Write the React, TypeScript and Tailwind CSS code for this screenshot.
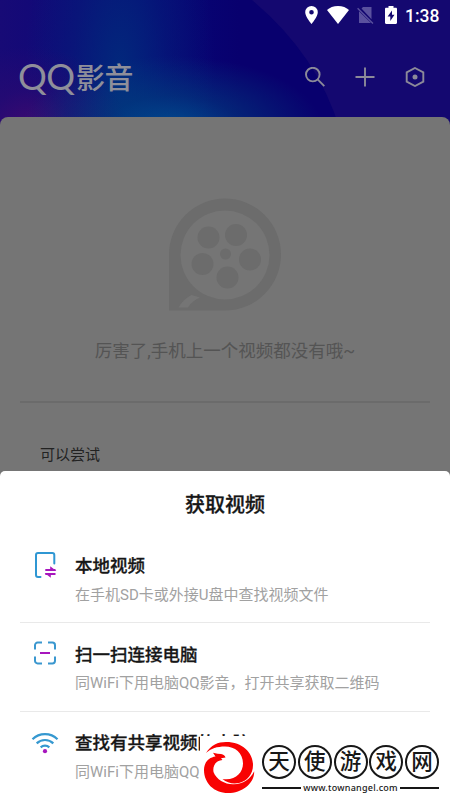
import type { ReactNode } from 'react';

type SourceItem = {
  title: string;
  desc: string;
  icon: ReactNode;
};

function PhoneTransferIcon() {
  return (
    <svg className="size-[30px]" viewBox="0 0 30 30" fill="none">
      <path d="M10.500 27H8a2 2 0 0 1-2-2V5a2 2 0 0 1 2-2h14.300a2 2 0 0 1 2 2v8.500" stroke="#2f97d3" strokeWidth="2" strokeLinecap="round" />
      <path d="M15.300 20h10.200M15.300 24h10.200" stroke="#a716bd" strokeWidth="2" />
      <path d="M20.200 16.200l6.200 4.800h-6.200zM20.800 27.800L14.600 23h6.200z" fill="#a716bd" />
    </svg>
  );
}

function ScanIcon() {
  return (
    <svg className="size-[30px]" viewBox="0 0 30 30" fill="none">
      <path
        d="M12 4.600H7.600A2.600 2.600 0 0 0 5 7.200v4.300M18 4.600h4.400A2.600 2.600 0 0 1 25 7.200v4.300M12 25.400H7.600A2.600 2.600 0 0 1 5 22.800v-4.300M18 25.400h4.400a2.600 2.600 0 0 0 2.600-2.600v-4.300"
        stroke="#3a97cf"
        strokeWidth="2"
      />
      <path d="M10 15h10" stroke="#a716bd" strokeWidth="2" />
    </svg>
  );
}

function WifiShareIcon() {
  return (
    <svg className="size-[30px]" viewBox="0 0 30 30" fill="none" strokeWidth="2.200">
      <path d="M2.500 12.200a17.700 17.700 0 0 1 25 0M6.700 16.400a11.800 11.800 0 0 1 16.600 0M10.700 20.400a6.100 6.100 0 0 1 8.600 0" stroke="#3598d0" />
      <circle cx="15" cy="24.200" r="2.100" fill="#a716bd" />
    </svg>
  );
}

const SOURCES: SourceItem[] = [
  { title: '本地视频', desc: '在手机SD卡或外接U盘中查找视频文件', icon: <PhoneTransferIcon /> },
  { title: '扫一扫连接电脑', desc: '同WiFi下用电脑QQ影音，打开共享获取二维码', icon: <ScanIcon /> },
  { title: '查找有共享视频的电脑', desc: '同WiFi下用电脑QQ', icon: <WifiShareIcon /> },
];

function StatusBar() {
  return (
    <div className="flex h-[30px] items-center justify-end pr-[10px] text-white">
      <svg className="h-[18px] w-[13px]" viewBox="0 0 13 18">
        <path fill="currentColor" fillRule="evenodd" d="M6.500 0A6.300 6.300 0 0 0 .2 6.300C.2 11 6.500 18 6.500 18s6.300-7 6.300-11.700A6.300 6.300 0 0 0 6.500 0zm0 4a2.300 2.300 0 1 1 0 4.600 2.300 2.300 0 0 1 0-4.600z" />
      </svg>
      <svg className="ml-[9px] h-[18px] w-[22px]" viewBox="0 0 22 18">
        <path fill="currentColor" d="M11 18L0 4.100C2.500 1.600 6.500 0 11 0s8.500 1.600 11 4.100z" />
      </svg>
      <svg className="ml-[8px] h-[18px] w-[17px] text-[#5a519e]" viewBox="0 0 17 18">
        <path fill="currentColor" d="M4.500 2.500L6 1h8.500v12.200zM2 5.300L14 17H2z" />
        <path stroke="currentColor" strokeWidth="1.300" d="M.6 2.200L16 17.500" />
      </svg>
      <svg className="ml-[11px] h-[18px] w-[12px]" viewBox="0 0 12 18">
        <path fill="currentColor" fillRule="evenodd" d="M3.500 0h5v1.800h2.300c.7 0 1.200.5 1.200 1.200v13.800c0 .7-.5 1.200-1.200 1.200H1.200C.5 18 0 17.500 0 16.800V3c0-.7.500-1.200 1.200-1.200h2.300zM7 4.500l-4.400 6h2.700V15l4.200-6.200H7z" />
      </svg>
      <span className="ml-[8px] w-[35px] pt-px whitespace-nowrap text-[17.500px] font-medium leading-[30px] font-[Roboto,sans-serif]">1:38</span>
    </div>
  );
}

function Header() {
  return (
    <header className="relative h-[130px] bg-[#08006e] bg-[radial-gradient(ellipse_150px_72px_at_172px_128px,#005090e6_0%,#00468080_45%,#00408000_100%),radial-gradient(ellipse_95px_80px_at_30px_126px,#3c0a70_0%,#300a7080_45%,#200a7000_100%),radial-gradient(ellipse_95px_230px_at_120px_70px,#02287c_0%,#04227a80_50%,#05187a00_100%),linear-gradient(90deg,#170a76_0px,#100878_60px,#070778_140px,#08006e_240px)]">
      <svg className="absolute inset-0 h-full w-full" viewBox="0 0 450 130" fill="none">
        <path d="M252 0Q318 55 340 130H450V0z" fill="#190b71" fillOpacity=".7" />
      </svg>
      <div className="relative">
        <StatusBar />
        <div className="flex h-[94px] items-center justify-between pr-[25px] pl-[18px] text-[#8c8a99]">
          <h1 className="-mt-[2px] flex h-[36px] items-center whitespace-nowrap text-[#8f8f9a]">
            <span className="w-[58px] text-[36px] leading-[36px] tracking-[-0.500px] font-[Lato,sans-serif]">QQ</span>
            <span className="text-[29px] font-medium leading-[36px] tracking-[-0.500px] font-['Noto_Sans_CJK_SC',sans-serif]">影音</span>
          </h1>
          <div className="flex items-center gap-[30px]">
            <svg className="size-[20px]" viewBox="0 0 20 20" fill="none" stroke="currentColor" strokeWidth="1.900">
              <circle cx="7.800" cy="7.600" r="6.800" />
              <path d="M12.600 12.400L19.300 19.100" />
            </svg>
            <svg className="size-[20px]" viewBox="0 0 20 20" fill="none" stroke="currentColor" strokeWidth="1.900">
              <path d="M10 .5v19M.5 10h19" />
            </svg>
            <svg className="size-[20px]" viewBox="0 0 20 20" fill="none" stroke="currentColor" strokeWidth="1.900">
              <path d="M10 1l8.300 4.300v9.400L10 19l-8.300-4.300V5.300z" />
              <circle cx="10" cy="10" r="2.500" fill="currentColor" stroke="none" />
            </svg>
          </div>
        </div>
      </div>
    </header>
  );
}

function EmptyReel() {
  return (
    <svg className="h-[113px] w-[113px]" viewBox="0 0 113 113">
      <path fill="#6c6c6c" fillRule="evenodd" d="M0 112.500V57a56 56 0 1 1 56 55.500zM56 12.500a44.500 44.500 0 1 0 0 89 44.500 44.500 0 0 0 0-89z" />
      <g fill="#6c6c6c">
        <circle cx="39.500" cy="39.500" r="11" />
        <circle cx="67" cy="37" r="11" />
        <circle cx="33.500" cy="66" r="11" />
        <circle cx="81" cy="61.500" r="11" />
        <circle cx="58.500" cy="79.500" r="11" />
        <circle cx="56.500" cy="56" r="5.500" />
      </g>
      <path fill="#757575" d="M9.500 109.500c3-5 7-9.500 13-12.500l8.500 2.500c-5 2-9 5-12 10z" />
    </svg>
  );
}

function SourceRow({ title, desc, icon }: SourceItem) {
  return (
    <li className="mx-5 flex h-[88.500px] border-b border-[#e9e9e9] pl-[10px] last:border-b-0">
      <div className="mt-[15px] shrink-0">{icon}</div>
      <div className="ml-[15px] pt-[18.500px] whitespace-nowrap">
        <p className="text-[17.500px] font-medium leading-[26px] text-[#161616] [-webkit-text-stroke:0.300px_#161616]">{title}</p>
        <p className="mt-[3.500px] text-[15px] leading-[24px] text-[#a1a1a1]">{desc}</p>
      </div>
    </li>
  );
}

function PhoenixMark() {
  return (
    <svg className="size-[52px]" viewBox="0 0 52 52" fill="#f80202">
      <path d="M3 12C8 4 15 1 23 1c17 0 27 11 27 23 0 9.500-6 16-14 18-6 1.200-12 0-16.500-4C32 40 40 32 40 22.500 40 12 32 5.500 22 5.500 14 5.500 8 7.500 3 12z" />
      <path d="M22.500 16.500l-4.500.8 1.500 1.700C12.500 19.500 9.500 25 10.500 31 13.500 39 22.500 43.700 31 43.200c9-.5 16-4.500 20.200-13C51.500 42.500 39 52 25 52 11 52 1 42 1 29c0-7.500 4.500-12.500 11.500-13.500L10 11.800l4.500 1 3.500.2c2.500.5 4 1.800 4.500 3.500z" />
    </svg>
  );
}

function SiteBadge() {
  return (
    <div className="absolute top-[736px] left-[200px] flex h-[64px] w-[250px] bg-white text-[#171717]">
      <div className="mt-[5px] ml-[3px] shrink-0">
        <PhoenixMark />
      </div>
      <div className="mt-[9px] ml-[7px] w-[177px]">
        <div className="flex justify-between">
          {['天', '使', '游', '戏', '网'].map((c) => (
            <span key={c} className="flex size-[34px] shrink-0 items-center justify-center rounded-full border-2 border-[#171717] pb-px text-[21.500px] font-medium leading-[30px]">
              {c}
            </span>
          ))}
        </div>
        <div className="mt-[3px] flex h-[12px] items-center justify-between">
          <span className="h-[2px] w-[39px] bg-[#171717]" />
          <span className="text-center text-[9px] font-medium leading-[12px] tracking-[0.250px] font-['Noto_Sans',sans-serif]">www.townangel.com</span>
          <span className="h-[2px] w-[39px] bg-[#171717]" />
        </div>
      </div>
    </div>
  );
}

export default function App() {
  return (
    <div className="relative h-[800px] w-[450px] overflow-hidden bg-[#08006e] font-[Roboto,'Noto_Sans_CJK_SC',sans-serif]">
      <Header />
      <main className="relative -mt-[13px] flex h-[400px] flex-col items-center rounded-t-[8px] bg-[#757575] pt-[81px]">
        <EmptyReel />
        <p className="mt-[27px] text-[17.500px] leading-[26px] text-[#545454]">厉害了,手机上一个视频都没有哦~</p>
        <div className="mt-[37px] h-[2px] w-[410px] bg-[#6b6b6b]" />
        <p className="mt-[40px] w-full pl-[40px] text-[15px] leading-[24px] text-[#222]">可以尝试</p>
      </main>
      <section className="absolute inset-x-0 top-[471px] bottom-0 rounded-t-[5px] bg-white">
        <h2 className="pt-[19px] text-center text-[20px] font-medium leading-[30px] text-[#161616] [-webkit-text-stroke:0.300px_#161616]">获取视频</h2>
        <ul className="mt-[14.500px]">
          {SOURCES.map((s) => (
            <SourceRow key={s.title} {...s} />
          ))}
        </ul>
      </section>
      <SiteBadge />
    </div>
  );
}
